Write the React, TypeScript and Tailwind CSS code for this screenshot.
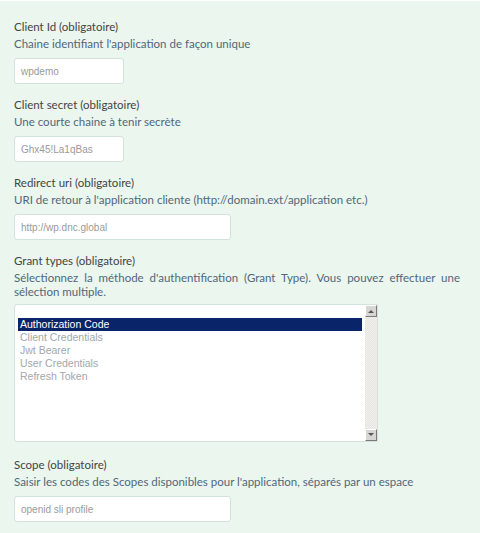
const grantTypes = [
  'Authorization Code',
  'Client Credentials',
  'Jwt Bearer',
  'User Credentials',
  'Refresh Token',
]

const Field = ({
  label,
  help,
  children,
  justify = false,
}: {
  label: string
  help: string
  children: React.ReactNode
  justify?: boolean
}) => (
  <div className="flex flex-col">
    <div className="text-[11.5px] leading-[18px] text-[#444]">{label}</div>
    <div className={`mt-[1px] text-[11.5px] leading-[14px] text-[#52667a] ${justify ? 'text-justify' : ''}`}>
      {help}
    </div>
    {children}
  </div>
)

const TextInput = ({ value, wide = false }: { value: string; wide?: boolean }) => (
  <div
    className={`mt-[7px] flex h-[26px] items-center rounded-[3px] border border-[#d3e3da] bg-white pl-[6px] font-['Liberation_Sans',Arial,sans-serif] text-[10px] text-[#9a9a9a] ${wide ? 'w-[217px]' : 'w-[110px]'}`}
  >
    {value}
  </div>
)

const ScrollArrow = ({ down = false }: { down?: boolean }) => (
  <div className="flex h-[12px] w-[12px] items-center justify-center border border-t-white border-l-white border-r-[#7a7a7a] border-b-[#7a7a7a] bg-[#d8d6d2]">
    <svg width="6" height="4" viewBox="0 0 6 4">
      {down ? <path d="M0 0h6L3 3z" fill="#555" /> : <path d="M0 4h6L3 1z" fill="#555" />}
    </svg>
  </div>
)

export default function App() {
  return (
    <div className="min-h-[533px] w-[480px] border-t border-white bg-[#eaf6ee] pl-[14px] pr-[20px] pt-[17px] font-['Lato',sans-serif]">
      <div className="flex flex-col gap-[12px]">
        <Field label="Client Id (obligatoire)" help="Chaine identifiant l'application de façon unique">
          <TextInput value="wpdemo" />
        </Field>

        <Field label="Client secret (obligatoire)" help="Une courte chaine à tenir secrète">
          <TextInput value="Ghx45!La1qBas" />
        </Field>

        <Field
          label="Redirect uri (obligatoire)"
          help="URI de retour à l'application cliente (http://domain.ext/application etc.)"
        >
          <TextInput value="http://wp.dnc.global" wide />
        </Field>

        <Field
          label="Grant types (obligatoire)"
          help="Sélectionnez la méthode d'authentification (Grant Type). Vous pouvez effectuer une sélection multiple."
          justify
        >
          {/* multi-select list */}
          <div className="mt-[5px] mb-[2px] flex h-[138px] w-[364px] rounded-l-[3px] border border-[#d3e3da] bg-white">
            <div className="flex-1 pl-[3px] pr-[3px] pt-[13px] font-['Liberation_Sans',Arial,sans-serif] text-[10.5px] leading-[13px]">
              {grantTypes.map((g, i) => (
                <div
                  key={g}
                  className={i === 0 ? 'bg-[#0a246a] pl-[2px] text-white' : 'pl-[2px] text-[#a3a7ab]'}
                >
                  {g}
                </div>
              ))}
            </div>
            <div className="flex w-[12px] flex-col justify-between bg-[repeating-conic-gradient(#e6e4e0_0_25%,#f2f1ee_0_50%)] bg-[length:2px_2px]">
              <ScrollArrow />
              <ScrollArrow down />
            </div>
          </div>
        </Field>

        <Field
          label="Scope (obligatoire)"
          help="Saisir les codes des Scopes disponibles pour l'application, séparés par un espace"
        >
          <TextInput value="openid sli profile" wide />
        </Field>
      </div>
    </div>
  )
}
